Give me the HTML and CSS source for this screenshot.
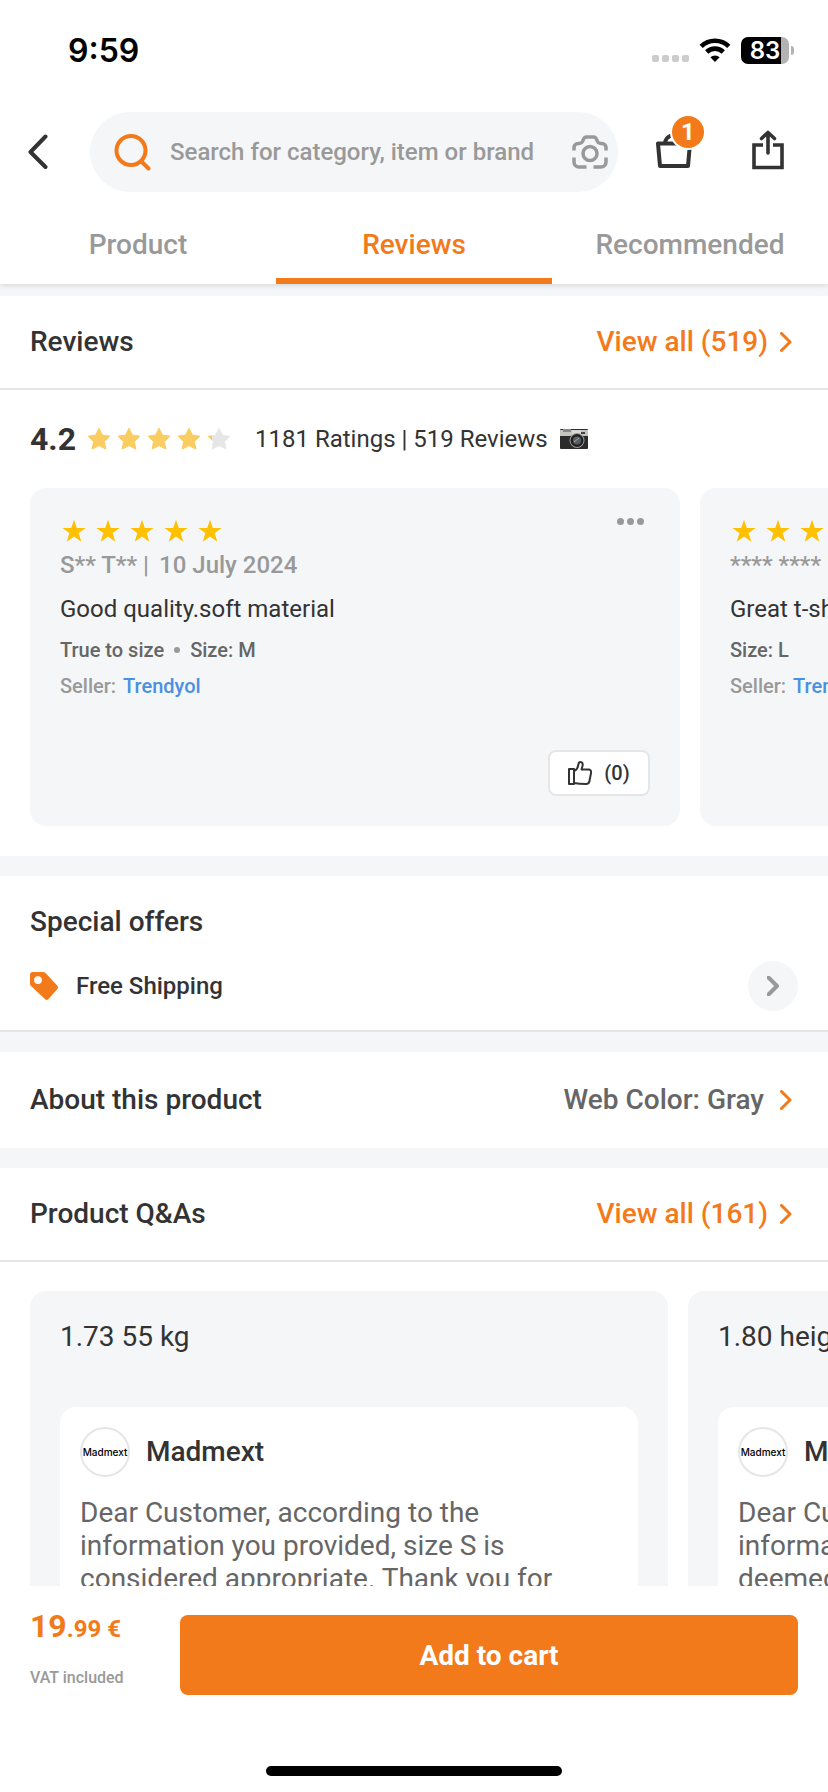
FILE: index.html
```html
<!DOCTYPE html>
<html lang="en">
<head>
    <meta charset="UTF-8">
    <meta name="viewport" content="width=device-width, initial-scale=1.0">
    <title>Product Reviews</title>
    <link rel="stylesheet" href="styles.css">
</head>
<body>
    <!-- Shared icons -->
    <svg class="sprite" aria-hidden="true">
        <symbol id="star" viewBox="0 0 24 24">
            <path d="M12 0.8l2.8 8.1h8.9l-7.1 5.2 2.7 8.6L12 17.4l-7.3 5.3 2.7-8.6L0.3 8.9h8.9z"/>
        </symbol>
        <symbol id="star-round" viewBox="0 0 24 24">
            <path d="M12 1.2l3.4 6.9 7.6 1.1-5.5 5.4 1.3 7.6-6.8-3.6-6.8 3.6 1.3-7.6L1 9.2l7.6-1.1z" stroke-width="1" stroke-linejoin="round"/>
        </symbol>
        <symbol id="chevron" viewBox="0 0 12 20">
            <path d="M1.500 1.500L10 10l-8.500 8.500" fill="none" stroke="currentColor" stroke-linecap="round" stroke-linejoin="round"/>
        </symbol>
    </svg>

    <div class="status-bar">
        <span class="time">9:59</span>
        <div class="status-icons">
            <div class="signal"><i></i><i></i><i></i><i></i></div>
            <svg class="wifi" viewBox="0 0 32 24" aria-hidden="true">
                <path d="M2.200 8.300a19.800 19.800 0 0 1 27.600 0M7.700 14a12 12 0 0 1 16.600 0" fill="none" stroke="#000" stroke-width="4.600"/>
                <path d="M16 24l-4.600-4.800a6.800 6.800 0 0 1 9.200 0z"/>
            </svg>
            <div class="battery"><span>83</span></div>
        </div>
    </div>

    <header class="top-bar">
        <button class="icon-button" type="button" aria-label="Back">
            <svg width="20" height="36" viewBox="0 0 20 36"><path d="M17.500 2.500L2.500 18l15 15" fill="none" stroke="#333" stroke-width="4" stroke-linecap="round" stroke-linejoin="round"/></svg>
        </button>
        <div class="search">
            <svg width="37" height="37" viewBox="0 0 37 37" aria-hidden="true"><g fill="none" stroke="#f27a1a" stroke-width="4" stroke-linecap="round"><circle cx="17" cy="16.500" r="14.500"/><path d="M27.500 27.500l7 7"/></g></svg>
            <input type="text" aria-label="Search" placeholder="Search for category, item or brand">
            <button class="camera-button" type="button" aria-label="Search by photo">
                <svg width="36" height="34" viewBox="0 0 36 34"><g fill="none" stroke="#999" stroke-width="3.500"><path d="M2 15.500v-3a4 4 0 0 1 4-4h1.500a3.500 3.500 0 0 0 3-2l1-2.300a3.500 3.500 0 0 1 3-2.200h7a3.500 3.500 0 0 1 3 2.200l1 2.300a3.500 3.500 0 0 0 3 2H30a4 4 0 0 1 4 4v3M2 22.500V27a5 5 0 0 0 5 5h7.500M34 22.500V27a5 5 0 0 1-5 5h-7.500"/><circle cx="18" cy="18.500" r="7"/></g></svg>
            </button>
        </div>
        <button class="icon-button" type="button" aria-label="Cart">
            <span class="basket">
                <svg width="36" height="36" viewBox="0 0 36 36"><g fill="none" stroke="#333" stroke-width="4" stroke-linejoin="round"><path d="M2 9.500h32L32 32H4z"/><path d="M9 9.500c0-4 3-7.500 8-8.500"/></g></svg>
                <span class="badge">1</span>
            </span>
        </button>
        <button class="icon-button" type="button" aria-label="Share">
            <svg width="32" height="44" viewBox="0 0 32 44"><g fill="none" stroke="#333" stroke-width="3.600"><path d="M11 15H2v22.500h28V15h-9"/><path d="M16 23V3M9.500 8.500L16 2.500l6.500 6" stroke-linecap="round" stroke-linejoin="round"/></g></svg>
        </button>
    </header>

    <nav class="tabs">
        <a href="#product">Product</a>
        <a href="#reviews" class="active">Reviews</a>
        <a href="#recommended">Recommended</a>
    </nav>

    <main>
        <section id="reviews">
            <div class="section-head">
                <h2>Reviews</h2>
                <a href="#all-reviews">View all (519) <svg class="chevron"><use href="#chevron"/></svg></a>
            </div>
            <div class="rating">
                <strong>4.2</strong>
                <div class="rating-stars">
                    <svg><use href="#star-round"/></svg>
                    <svg><use href="#star-round"/></svg>
                    <svg><use href="#star-round"/></svg>
                    <svg><use href="#star-round"/></svg>
                    <svg viewBox="0 0 24 24">
                        <defs><linearGradient id="partial"><stop offset="0.2" stop-color="#facd62"/><stop offset="0.2" stop-color="#e6e6e6"/></linearGradient></defs>
                        <path fill="url(#partial)" stroke="none" d="M12 0.700l3.700 7.100 7.900 1.100-5.600 5.700 1.400 8.100-7.400-3.800-7.400 3.800L6 14.600 0.400 8.900l7.900-1.100z"/>
                    </svg>
                </div>
                <span>1181 Ratings | 519 Reviews</span>
                <svg class="photo-icon" viewBox="0 0 28 20" aria-hidden="true">
                    <rect width="28" height="20" rx="1" fill="#2b2b2b"/>
                    <path d="M0 1h28v6H0z" fill="#c4c4c1"/>
                    <path d="M3 0h8v3H3z" fill="#888"/>
                    <path d="M12 1h9v5h-9z" fill="#d8d8d5"/>
                    <path d="M21 3h4v2h-4z" fill="#444"/>
                    <circle cx="17" cy="11.500" r="7.500" fill="#999"/>
                    <circle cx="17" cy="11.500" r="6.500" fill="#222"/>
                    <circle cx="17" cy="11.500" r="4" fill="#596064"/>
                    <path d="M14 13l5-4" stroke="#a5aaac"/>
                </svg>
            </div>
            <div class="carousel">
                <article class="review-card">
                    <div class="card-top">
                        <div class="stars">
                            <svg><use href="#star"/></svg>
                            <svg><use href="#star"/></svg>
                            <svg><use href="#star"/></svg>
                            <svg><use href="#star"/></svg>
                            <svg><use href="#star"/></svg>
                        </div>
                        <button class="more" type="button" aria-label="More options"><i></i><i></i><i></i></button>
                    </div>
                    <p class="author"><span>S** T** |</span><span>10 July 2024</span></p>
                    <p class="comment">Good quality.soft material</p>
                    <p class="details"><span>True to size</span><i></i><span>Size: M</span></p>
                    <p class="seller">Seller: <a href="#seller">Trendyol</a></p>
                    <button class="like" type="button">
                        <svg width="24" height="24" viewBox="0 0 24 24" aria-hidden="true"><g fill="none" stroke="#333" stroke-width="2" stroke-linejoin="round"><path d="M1 8h5v15H1z"/><path d="M6 10c3-1 4-3.500 4.500-7C10.700 1.500 11.500 1 12.500 1c2 0 2.500 2 2 4l-1 3.500h7c2 0 3 1.500 2.500 3.500l-1.500 8c-.3 1.700-1.500 3-3.500 3-4 0-8-.2-12-1"/></g></svg>
                        (0)
                    </button>
                </article>
                <article class="review-card">
                    <div class="card-top">
                        <div class="stars">
                            <svg><use href="#star"/></svg>
                            <svg><use href="#star"/></svg>
                            <svg><use href="#star"/></svg>
                            <svg><use href="#star"/></svg>
                            <svg><use href="#star"/></svg>
                        </div>
                    </div>
                    <p class="author"><span>**** ****</span></p>
                    <p class="comment">Great t-shirt</p>
                    <p class="details"><span>Size: L</span></p>
                    <p class="seller">Seller: <a href="#seller">Trendyol</a></p>
                </article>
            </div>
        </section>

        <section class="offers">
            <h2>Special offers</h2>
            <div class="offer">
                <svg width="28" height="28" viewBox="0 0 28 28" aria-hidden="true"><path fill="#f27a1a" fill-rule="evenodd" d="M3 0h10q1.500 0 2.500 1l11.700 12.500q1.600 2 0 3.700L18.500 27q-1.800 1.800-3.600 0L1 14Q0 13 0 11.500V3Q0 0 3 0zM8 4.200a3.900 3.900 0 1 0 0 7.800 3.900 3.900 0 0 0 0-7.800z"/></svg>
                <span>Free Shipping</span>
                <button class="round-button" type="button" aria-label="Show offer"><svg class="chevron"><use href="#chevron"/></svg></button>
            </div>
        </section>

        <section class="about">
            <h2>About this product</h2>
            <a href="#about">Web Color: Gray <svg class="chevron"><use href="#chevron"/></svg></a>
        </section>

        <section class="questions">
            <div class="section-head">
                <h2>Product Q&amp;As</h2>
                <a href="#all-questions">View all (161) <svg class="chevron"><use href="#chevron"/></svg></a>
            </div>
            <div class="carousel">
                <article class="question-card">
                    <p class="question">1.73 55 kg</p>
                    <div class="answer">
                        <div class="answer-head">
                            <span class="avatar">Madmext</span>
                            <h3>Madmext</h3>
                        </div>
                        <p>Dear Customer, according to the information you provided, size S is considered appropriate. Thank you for choosing us.</p>
                    </div>
                </article>
                <article class="question-card">
                    <p class="question">1.80 height</p>
                    <div class="answer">
                        <div class="answer-head">
                            <span class="avatar">Madmext</span>
                            <h3>Madmext</h3>
                        </div>
                        <p>Dear Customer, according to the information you provided, size 2XL is deemed appropriate. Thank you for choosing us.</p>
                    </div>
                </article>
            </div>
        </section>
    </main>

    <footer>
        <div class="buy-row">
            <div class="price">
                <strong>19<small>.99 €</small></strong>
                <span>VAT included</span>
            </div>
            <button class="add-to-cart" type="button">Add to cart</button>
        </div>
        <div class="home-indicator"></div>
    </footer>
</body>
</html>
```

FILE: styles.css
```css
/* Global Styles */
* {
    box-sizing: border-box;
}

body {
    margin: 0;
    height: 100vh;
    display: flex;
    flex-direction: column;
    overflow: hidden;
    font-family: Roboto, sans-serif;
    font-size: 24px;
    color: #333;
    background-color: #fff;
}

h2, h3, p {
    margin: 0;
}

h2, h3 {
    font-size: 28px;
    font-weight: 500;
    line-height: 34px;
}

a {
    color: inherit;
    text-decoration: none;
}

button {
    padding: 0;
    border: none;
    background: none;
    font-family: inherit;
    color: inherit;
    cursor: pointer;
}

svg {
    display: block;
    flex-shrink: 0;
}

.sprite {
    display: none;
}

.chevron {
    width: 12px;
    height: 20px;
    stroke-width: 3px;
}

/* Status bar */
.status-bar {
    display: flex;
    justify-content: space-between;
    align-items: center;
    height: 100px;
    padding: 0 34px 0 68px;
    flex-shrink: 0;
}

.time {
    font-family: Inter, sans-serif;
    font-size: 32px;
    font-weight: 600;
    color: #000;
}

.status-icons {
    display: flex;
    align-items: center;
    gap: 10px;
}

.signal {
    display: flex;
    gap: 3px;
    padding-top: 16px;
}

.signal i {
    width: 7px;
    height: 7px;
    border-radius: 2px;
    background-color: #ccc;
}

.wifi {
    width: 32px;
    height: 24px;
}

.battery {
    position: relative;
    width: 48px;
    height: 27px;
    margin-right: 5px;
    border-radius: 7px;
    background: linear-gradient(to right, #000 83%, #b3b3b3 83%);
    color: #fff;
    font-family: Inter, sans-serif;
    font-size: 24px;
    font-weight: 600;
    line-height: 27px;
    text-align: center;
}

.battery::after {
    content: "";
    position: absolute;
    top: 9px;
    right: -5px;
    width: 3px;
    height: 9px;
    border-radius: 0 3px 3px 0;
    background-color: #b3b3b3;
}

/* Header */
.top-bar {
    display: flex;
    align-items: center;
    padding: 12px 13px 16px 0;
    flex-shrink: 0;
}

.icon-button {
    display: flex;
    align-items: center;
    justify-content: center;
    width: 94px;
    height: 80px;
}

.icon-button:first-child {
    justify-content: flex-start;
    width: 90px;
    padding-left: 28px;
}

.search {
    display: flex;
    align-items: center;
    flex: 1;
    height: 80px;
    margin-right: 9px;
    padding: 0 10px 0 24px;
    border-radius: 40px;
    background-color: #f4f6f8;
}

.search input {
    flex: 1;
    min-width: 0;
    padding: 0;
    margin: 0 19px;
    border: none;
    outline: none;
    background: none;
    font-family: inherit;
    font-size: 24px;
    font-weight: 500;
    color: #333;
}

.search input::placeholder {
    color: #999;
    opacity: 1;
}

.basket {
    position: relative;
}

.badge {
    position: absolute;
    top: -18px;
    left: 16px;
    width: 32px;
    height: 32px;
    border-radius: 50%;
    box-shadow: 0 0 0 2px #fff;
    background-color: #f27a1a;
    color: #fff;
    font-size: 24px;
    font-weight: 700;
    line-height: 32px;
    text-align: center;
}

/* Tabs */
.tabs {
    display: flex;
    flex-shrink: 0;
    height: 76px;
    background-color: #fff;
    box-shadow: 0 1px 6px rgba(0, 0, 0, 0.15);
    clip-path: inset(0 0 -12px 0);
    z-index: 1;
}

.tabs a {
    flex: 1;
    padding: 4px 0;
    font-size: 28px;
    font-weight: 500;
    line-height: 66px;
    text-align: center;
    color: #999;
}

.tabs .active {
    border-bottom: 6px solid #f27a1a;
    color: #f27a1a;
}

/* Sections */
main {
    flex: 1;
    min-height: 0;
    overflow: hidden;
    display: flex;
    flex-direction: column;
    gap: 20px;
    padding-top: 12px;
    background-color: #f4f6f8;
}

section {
    flex-shrink: 0;
    background-color: #fff;
}

.section-head, .about {
    display: flex;
    align-items: center;
    justify-content: space-between;
    padding: 29px 36px 29px 30px;
    font-size: 28px;
    font-weight: 500;
    line-height: 34px;
}

.section-head {
    border-bottom: 2px solid #e6e6e6;
}

.section-head a, .about a {
    display: flex;
    align-items: center;
    gap: 12px;
}

.section-head a, .about .chevron {
    color: #f27a1a;
}

/* Rating */
.rating {
    display: flex;
    align-items: center;
    height: 98px;
    padding: 0 30px;
}

.rating strong {
    font-size: 32px;
}

.rating-stars {
    display: flex;
    gap: 6px;
    margin: 0 24px 0 11px;
}

.rating-stars svg {
    width: 24px;
    height: 24px;
    fill: #facd62;
    stroke: #facd62;
}

.photo-icon {
    width: 28px;
    height: 20px;
    margin-left: 12px;
}

/* Cards */
.carousel {
    display: flex;
    gap: 20px;
    padding: 0 0 30px 30px;
    overflow: hidden;
}

.review-card {
    display: flex;
    flex-direction: column;
    flex: 0 0 calc(100vw - 178px);
    min-height: 338px;
    padding: 30px;
    border-radius: 16px;
    background-color: #f4f6f8;
}

.card-top {
    display: flex;
    justify-content: space-between;
    margin-bottom: 2px;
}

.stars {
    display: flex;
    gap: 10px;
    padding: 1px 2px;
}

.stars svg {
    width: 24px;
    height: 24px;
    fill: #ffc000;
}

.more {
    display: flex;
    gap: 3px;
    padding: 0 6px;
}

.more i {
    width: 7px;
    height: 7px;
    border-radius: 50%;
    background-color: #999;
}

.author {
    display: flex;
    gap: 10px;
    font-weight: 500;
    line-height: 38px;
    color: #999;
}

.comment {
    margin-top: 8px;
    line-height: 34px;
}

.details, .seller {
    display: flex;
    align-items: center;
    margin-top: 12px;
    font-size: 20px;
    font-weight: 500;
    line-height: 24px;
}

.details {
    gap: 10px;
    color: #666;
}

.details i {
    width: 6px;
    height: 6px;
    border-radius: 50%;
    background-color: #999;
}

.seller {
    gap: 7px;
    color: #999;
}

.seller a {
    color: #4a90e2;
}

.like {
    display: flex;
    align-items: center;
    justify-content: center;
    align-self: flex-end;
    gap: 12px;
    width: 102px;
    height: 46px;
    margin-top: auto;
    border: 2px solid #e6e6e6;
    border-radius: 8px;
    background-color: #fff;
    font-size: 20px;
    font-weight: 500;
}

/* Special offers */
.offers {
    padding: 29px 30px 19px;
    border-bottom: 2px solid #e6e6e6;
}

.offer {
    display: flex;
    align-items: center;
    gap: 18px;
    margin-top: 22px;
    font-weight: 500;
}

.round-button {
    display: flex;
    align-items: center;
    justify-content: center;
    width: 50px;
    height: 50px;
    margin-left: auto;
    border-radius: 50%;
    background-color: #f4f6f8;
    color: #999;
}

.round-button .chevron {
    stroke-width: 4px;
}

/* About this product */
.about {
    padding-top: 31px;
    padding-bottom: 31px;
}

.about a {
    gap: 16px;
    color: #666;
}

/* Questions */
.questions .carousel {
    padding-top: 29px;
}

.question-card {
    flex: 0 0 calc(100vw - 190px);
    padding: 30px;
    border-radius: 16px;
    background-color: #f4f6f8;
}

.question {
    font-size: 28px;
    line-height: 32px;
}

.answer {
    margin-top: 54px;
    padding: 20px;
    border-radius: 16px;
    background-color: #fff;
    font-size: 28px;
    line-height: 33px;
    color: #666;
}

.answer-head {
    display: flex;
    align-items: center;
    gap: 16px;
    margin-bottom: 19px;
}

.answer-head h3 {
    color: #333;
}

.avatar {
    display: flex;
    align-items: center;
    justify-content: center;
    width: 50px;
    height: 50px;
    border: 2px solid #e6e6e6;
    border-radius: 50%;
    font-family: Inter, sans-serif;
    font-size: 10px;
    font-weight: 500;
    color: #000;
}

/* Bottom bar */
footer {
    flex-shrink: 0;
    padding: 29px 30px 16px;
    background-color: #fff;
}

.buy-row {
    display: flex;
}

.price {
    width: 150px;
    color: #f27a1a;
}

.price strong {
    display: block;
    font-size: 32px;
    line-height: 22px;
}

.price small {
    font-size: 24px;
}

.price span {
    display: block;
    margin-top: 28px;
    font-size: 16px;
    font-weight: 500;
    line-height: 20px;
    color: #999;
}

.add-to-cart {
    flex: 1;
    height: 80px;
    border-radius: 8px;
    background-color: #f27a1a;
    color: #fff;
    font-size: 28px;
    font-weight: 700;
}

.home-indicator {
    width: 296px;
    height: 10px;
    margin: 71px auto 0;
    border-radius: 5px;
    background-color: #000;
}
```
